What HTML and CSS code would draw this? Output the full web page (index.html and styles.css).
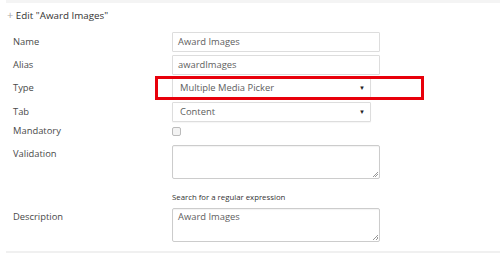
FILE: index.html
```html
<!DOCTYPE html>
<html>
<head>
<meta charset="utf-8">
<link rel="stylesheet" href="styles.css">
</head>
<body>
<div class="topstrip"></div>
<div class="header"><span class="plus">+</span> Edit "Award Images"</div>
<div class="form">
  <div class="row r-name">
    <label class="lbl">Name</label>
    <div class="ctl"><div class="input wide">Award Images</div></div>
  </div>
  <div class="row r-alias">
    <label class="lbl">Alias</label>
    <div class="ctl"><div class="input wide">awardImages</div></div>
  </div>
  <div class="row r-type">
    <label class="lbl">Type</label>
    <div class="ctl"><div class="input select">Multiple Media Picker<span class="caret">▼</span></div></div>
    <div class="highlight"></div>
  </div>
  <div class="row r-tab">
    <label class="lbl">Tab</label>
    <div class="ctl"><div class="input select">Content<span class="caret">▼</span></div></div>
  </div>
  <div class="row r-mand">
    <label class="lbl">Mandatory</label>
    <div class="ctl"><span class="checkbox"></span></div>
  </div>
  <div class="row r-valid">
    <label class="lbl">Validation</label>
    <div class="ctl">
      <div class="textarea"><span class="grip"></span></div>
      <div class="help">Search for a regular expression</div>
    </div>
  </div>
  <div class="row r-desc">
    <label class="lbl">Description</label>
    <div class="ctl"><div class="textarea">Award Images<span class="grip"></span></div></div>
  </div>
</div>
<div class="bottomline"></div>
</body>
</html>
```

FILE: styles.css
```css
* { box-sizing: border-box; }
body {
  margin: 0;
  width: 500px;
  height: 255px;
  background: #fff;
  font-family: "Open Sans", "Noto Sans", sans-serif;
  font-size: 9.4px;
  color: #555;
  overflow: hidden;
}
.topstrip {
  height: 3px;
  background: #f4f4f4;
  margin-left: 6px;
}
.header {
  margin-top: 5px;
  padding-left: 7px;
  height: 14px;
  line-height: 14px;
  font-size: 9.8px;
  color: #333;
}
.plus {
  color: #aaa;
  font-size: 11px;
}
.form {
  margin-top: 10px;
}
.row {
  position: relative;
  display: flex;
  align-items: flex-start;
}
.lbl {
  width: 172px;
  padding-left: 13px;
  color: #4a4a4a;
  line-height: 20px;
}
.ctl {
  flex: none;
}
.input {
  height: 20px;
  line-height: 18px;
  border: 1px solid #ddd;
  border-radius: 1px;
  padding-left: 5px;
  color: #606060;
  background: #fff;
}
.wide { width: 208px; }
.select {
  width: 199px;
  height: 20px;
  position: relative;
  padding-left: 7px;
  box-shadow: 0 1px 1px rgba(0,0,0,0.04);
}
.caret {
  position: absolute;
  right: 5px;
  top: 0;
  font-size: 6px;
  color: #222;
}
.r-name { margin-bottom: 3px; }
.r-alias { margin-bottom: 3px; }
.r-type { margin-bottom: 4px; }
.r-tab { margin-bottom: 4px; }
.r-mand { height: 19px; }
.r-mand .lbl { line-height: 10px; }
.checkbox {
  display: block;
  margin-top: 1px;
  width: 9px;
  height: 9px;
  border: 1px solid #bbb;
  border-radius: 2px;
  background: #f3f3f3;
}
.textarea {
  position: relative;
  width: 208px;
  height: 34px;
  border: 1px solid #ccc;
  border-radius: 2px;
  padding: 1px 5px;
  color: #606060;
  line-height: 14px;
  box-shadow: inset 0 1px 1px rgba(0,0,0,0.05);
}
.grip {
  position: absolute;
  right: 1px;
  bottom: 1px;
  width: 5px;
  height: 5px;
  background: linear-gradient(135deg, transparent 45%, #999 45%, #999 55%, transparent 55%, transparent 70%, #999 70%, #999 80%, transparent 80%);
}
.r-valid .lbl { line-height: 18px; }
.help {
  margin-top: 13px;
  font-size: 7.8px;
  color: #333;
  height: 11px;
  line-height: 11px;
}
.r-valid { margin-bottom: 5px; }
.r-desc .lbl { line-height: 18px; }
.highlight {
  position: absolute;
  left: 155px;
  top: -2px;
  width: 269px;
  height: 24px;
  border: 3px solid #e8000b;
}
.bottomline {
  margin-top: 9px;
  margin-left: 6px;
  height: 2px;
  background: #f0f0f0;
}
```
